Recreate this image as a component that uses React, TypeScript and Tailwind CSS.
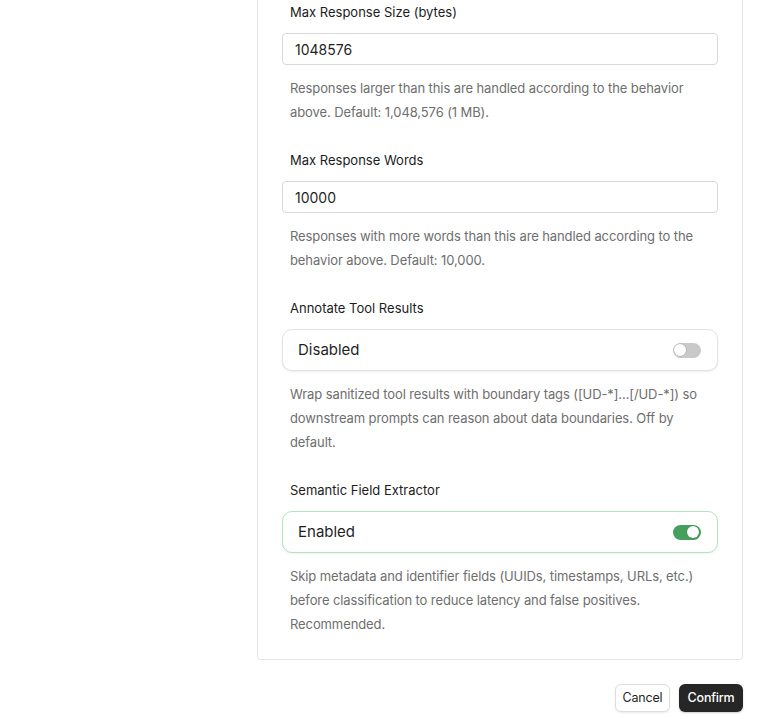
import React, { useState } from "react";

function Field({ label, value, help }: { label: string; value: string; help: string }) {
  return (
    <div className="pb-[27px]">
      <div className="px-2 text-[13px] leading-[18px] text-[#1c1c1c] mb-3">{label}</div>
      <input
        defaultValue={value}
        className="w-full h-8 px-3 rounded-[4px] border border-[#d9d9d9] bg-white text-[14px] text-[#1f1f1f] outline-none"
      />
      <p className="px-2 mt-[11px] text-[13px] leading-6 tracking-[-0.1px] text-[#6e6e6e]">{help}</p>
    </div>
  );
}

function ToggleField({
  label,
  help,
  initial,
  last,
}: {
  label: string;
  help: string;
  initial: boolean;
  last?: boolean;
}) {
  const [on, setOn] = useState(initial);
  return (
    <div className={last ? "pb-[23px]" : "pb-[27px]"}>
      <div className="px-2 text-[13px] leading-[18px] text-[#1c1c1c] mb-3">{label}</div>
      <button
        onClick={() => setOn(!on)}
        className={
          on
            ? "w-full h-[42px] flex items-center justify-between pl-[15px] pr-4 rounded-[10px] border border-[#b6e2c3] bg-white shadow-[0_1px_2px_rgba(0,0,0,0.06)]"
            : "w-full h-[42px] flex items-center justify-between pl-[15px] pr-4 rounded-[10px] border border-[#e3e3e3] bg-white shadow-[0_1px_2px_rgba(0,0,0,0.08)]"
        }
      >
        <span className="text-[15px] text-[#1f1f1f]">{on ? "Enabled" : "Disabled"}</span>
        <span
          className={
            on
              ? "w-[28px] h-[15px] rounded-full bg-[#45a05e] flex items-center justify-end px-[2px]"
              : "w-[28px] h-[15px] rounded-full bg-[#c9c9c9] flex items-center justify-start px-[1px]"
          }
        >
          <span className="w-[12px] h-[12px] rounded-full bg-white shadow-[0_0_0_0.5px_rgba(0,0,0,0.15)]" />
        </span>
      </button>
      <p className="px-2 mt-[11px] text-[13px] leading-6 tracking-[-0.1px] text-[#6e6e6e]">{help}</p>
    </div>
  );
}

export default function App() {
  return (
    <div
      className="w-[770px] h-[719px] bg-white overflow-hidden"
      style={{ fontFamily: "Inter, 'Noto Sans', sans-serif" }}
    >
      <div className="flex">
        <div className="w-[257px] shrink-0" />
        <div className="w-[486px] shrink-0">
          <div className="border-x border-b border-[#e6e6e6] rounded-b-[4px] px-6 pt-[3px]">
            <Field
              label="Max Response Size (bytes)"
              value="1048576"
              help="Responses larger than this are handled according to the behavior above. Default: 1,048,576 (1 MB)."
            />
            <Field
              label="Max Response Words"
              value="10000"
              help="Responses with more words than this are handled according to the behavior above. Default: 10,000."
            />
            <ToggleField
              label="Annotate Tool Results"
              initial={false}
              help="Wrap sanitized tool results with boundary tags ([UD-*]...[/UD-*]) so downstream prompts can reason about data boundaries. Off by default."
            />
            <ToggleField
              label="Semantic Field Extractor"
              initial={true}
              last
              help="Skip metadata and identifier fields (UUIDs, timestamps, URLs, etc.) before classification to reduce latency and false positives. Recommended."
            />
          </div>
          <div className="flex justify-end gap-[9px] mt-[24px]">
            <button className="w-[55px] h-7 rounded-[6px] border border-[#dedede] bg-white text-[12.5px] tracking-[-0.2px] text-[#1f1f1f] shadow-[0_1px_2px_rgba(0,0,0,0.08)]">
              Cancel
            </button>
            <button className="w-[64px] h-7 rounded-[6px] bg-[#262626] text-[12.5px] tracking-[-0.2px] font-medium text-white shadow-[0_1px_2px_rgba(0,0,0,0.2)]">
              Confirm
            </button>
          </div>
        </div>
      </div>
    </div>
  );
}
